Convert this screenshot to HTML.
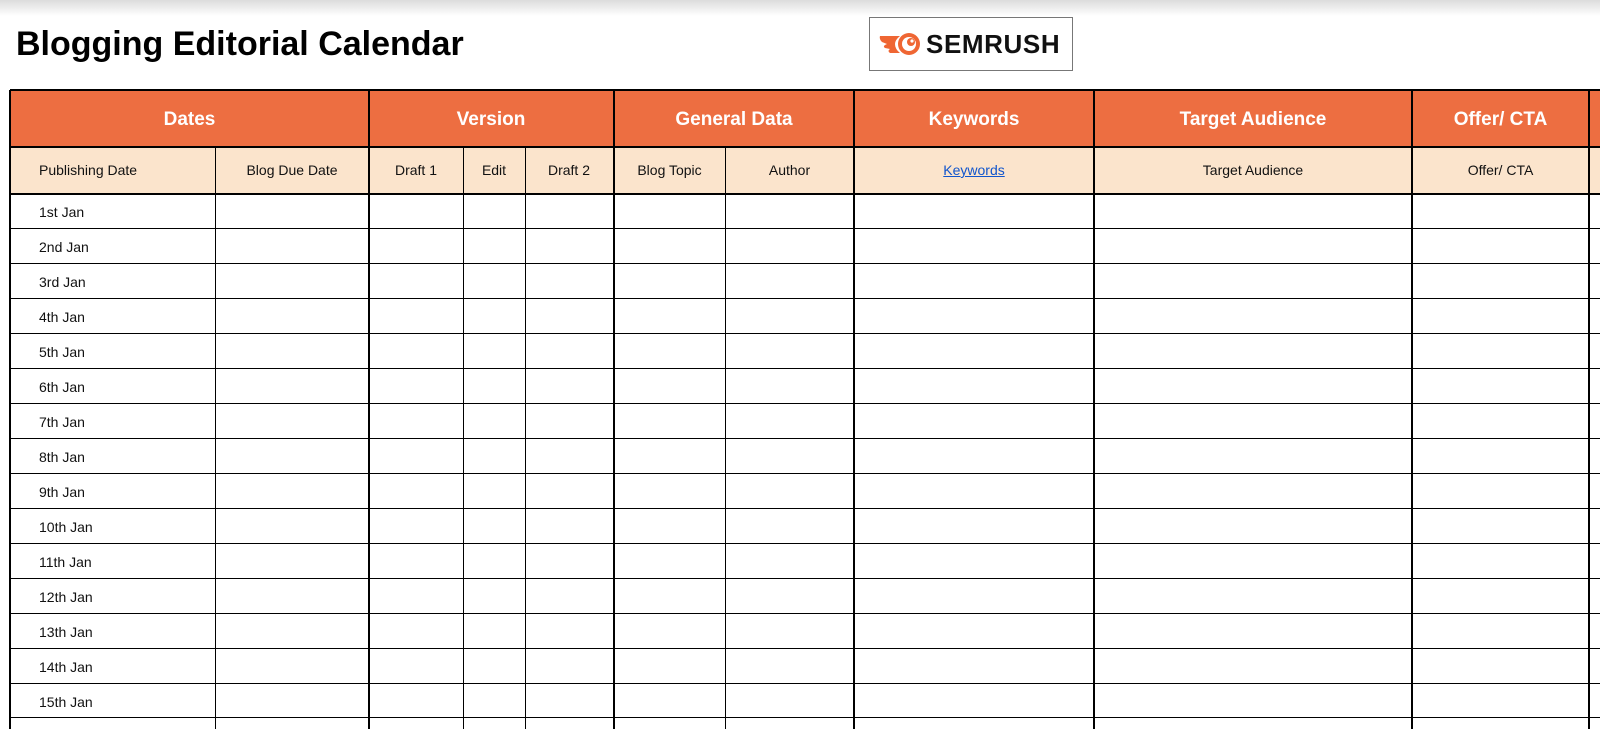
<!DOCTYPE html>
<html><head><meta charset="utf-8"><style>
body{margin:0;width:1600px;height:729px;overflow:hidden;background:#fff;font-family:"Liberation Sans",Arial,sans-serif;position:relative}
.a{position:absolute}
.v{position:absolute;background:#000;top:90px;bottom:0}
.h{position:absolute;background:#000;left:10px;width:1590px}
.t{position:absolute;text-align:center;white-space:nowrap}
.oh{color:#fff;font-weight:bold;font-size:19px;top:90px;height:57px;line-height:59px}
.sh{color:#111;font-size:14px;top:147px;height:47px;line-height:47px}
.d{position:absolute;left:39px;font-size:14px;color:#111;line-height:36px}
</style></head><body>
<div class="a" style="left:0;top:0;width:1600px;height:16px;background:linear-gradient(#dcdcdc,#fff)"></div>
<div class="a" style="left:16px;top:23px;font-size:34px;font-weight:bold;color:#000;line-height:42px">Blogging Editorial Calendar</div>
<div class="a" style="left:869px;top:17px;width:204px;height:54px;border:1px solid #777;box-sizing:border-box"></div>
<svg class="a" style="left:878px;top:31px" width="46" height="26" viewBox="0 0 46 26">
<path d="M2 5 L22 5 Q17 9 17 13 Q17 18 22 22 L12 22 Q9 20 12 18 L7 17 Q4 15 9 13 L4 11 Q1 8 2 5Z" fill="#ef6633"/>
<circle cx="31" cy="13" r="11" fill="#ef6633"/>
<circle cx="31" cy="13" r="7" fill="#fff"/>
<circle cx="33" cy="11" r="4" fill="#ef6633"/>
<circle cx="34" cy="10" r="1.6" fill="#fff"/>
</svg>
<div class="a" style="left:926px;top:28px;font-size:26px;font-weight:bold;color:#111;line-height:32px;letter-spacing:0.6px">SEMRUSH</div>

<div class="a" style="left:10px;top:90px;width:1590px;height:57px;background:#ed6e41"></div>
<div class="a" style="left:10px;top:147px;width:1590px;height:47px;background:#fbe4cc"></div>

<div class="h" style="top:89px;height:2px"></div>
<div class="h" style="top:146px;height:2px"></div>
<div class="h" style="top:193px;height:2px"></div>
<div class="h" style="top:228px;height:1px"></div>
<div class="h" style="top:263px;height:1px"></div>
<div class="h" style="top:298px;height:1px"></div>
<div class="h" style="top:333px;height:1px"></div>
<div class="h" style="top:368px;height:1px"></div>
<div class="h" style="top:403px;height:1px"></div>
<div class="h" style="top:438px;height:1px"></div>
<div class="h" style="top:473px;height:1px"></div>
<div class="h" style="top:508px;height:1px"></div>
<div class="h" style="top:543px;height:1px"></div>
<div class="h" style="top:578px;height:1px"></div>
<div class="h" style="top:613px;height:1px"></div>
<div class="h" style="top:648px;height:1px"></div>
<div class="h" style="top:683px;height:1px"></div>
<div class="h" style="top:717px;height:1px"></div>

<div class="v" style="left:9px;width:2px"></div>
<div class="v" style="left:215px;width:1px;top:147px"></div>
<div class="v" style="left:368px;width:2px"></div>
<div class="v" style="left:463px;width:1px;top:147px"></div>
<div class="v" style="left:525px;width:1px;top:147px"></div>
<div class="v" style="left:613px;width:2px"></div>
<div class="v" style="left:725px;width:1px;top:147px"></div>
<div class="v" style="left:853px;width:2px"></div>
<div class="v" style="left:1093px;width:2px"></div>
<div class="v" style="left:1411px;width:2px"></div>
<div class="v" style="left:1588px;width:2px"></div>

<div class="t oh" style="left:10px;width:359px">Dates</div>
<div class="t oh" style="left:369px;width:244px">Version</div>
<div class="t oh" style="left:614px;width:240px">General Data</div>
<div class="t oh" style="left:854px;width:240px">Keywords</div>
<div class="t oh" style="left:1094px;width:318px">Target Audience</div>
<div class="t oh" style="left:1412px;width:177px">Offer/ CTA</div>

<div class="a sh" style="left:39px">Publishing Date</div>
<div class="t sh" style="left:215px;width:154px">Blog Due Date</div>
<div class="t sh" style="left:369px;width:94px">Draft 1</div>
<div class="t sh" style="left:463px;width:62px">Edit</div>
<div class="t sh" style="left:525px;width:88px">Draft 2</div>
<div class="t sh" style="left:614px;width:111px">Blog Topic</div>
<div class="t sh" style="left:725px;width:129px">Author</div>
<div class="t sh" style="left:854px;width:240px"><span style="color:#1155cc;text-decoration:underline">Keywords</span></div>
<div class="t sh" style="left:1094px;width:318px">Target Audience</div>
<div class="t sh" style="left:1412px;width:177px">Offer/ CTA</div>

<div class="d" style="top:194px">1st Jan</div>
<div class="d" style="top:229px">2nd Jan</div>
<div class="d" style="top:264px">3rd Jan</div>
<div class="d" style="top:299px">4th Jan</div>
<div class="d" style="top:334px">5th Jan</div>
<div class="d" style="top:369px">6th Jan</div>
<div class="d" style="top:404px">7th Jan</div>
<div class="d" style="top:439px">8th Jan</div>
<div class="d" style="top:474px">9th Jan</div>
<div class="d" style="top:509px">10th Jan</div>
<div class="d" style="top:544px">11th Jan</div>
<div class="d" style="top:579px">12th Jan</div>
<div class="d" style="top:614px">13th Jan</div>
<div class="d" style="top:649px">14th Jan</div>
<div class="d" style="top:684px">15th Jan</div>
</body></html>
